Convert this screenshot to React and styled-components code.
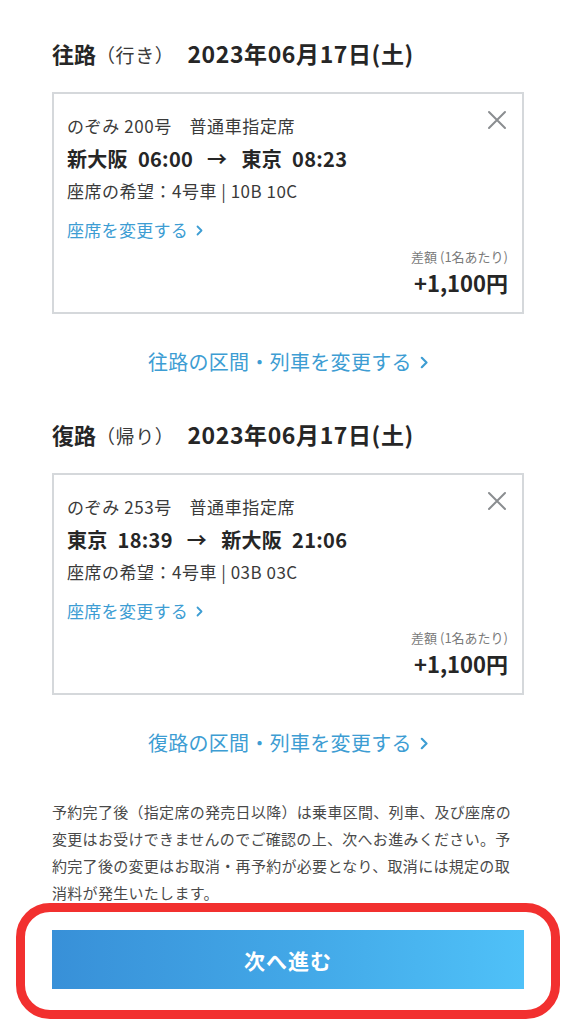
import styled, { createGlobalStyle } from "styled-components";

const GlobalStyle = createGlobalStyle`
  body {
    margin: 0;
    background: #ffffff;
    font-family: "Noto Sans CJK JP", "Noto Sans", sans-serif;
    color: #333333;
  }
`;

const Page = styled.main`
  padding: 37px 52px 0;
  display: flex;
  flex-direction: column;
`;

const SectionTitle = styled.h2`
  margin: ${(p) => (p.$first ? "0" : "41px")} 0 0;
  display: flex;
  align-items: baseline;
  font-size: 22px;
  line-height: 32px;
  font-weight: 700;
  color: #262626;
`;

const SubTitle = styled.span`
  font-size: 19px;
  font-weight: 400;
  letter-spacing: 0.6px;
  color: #3a3a3a;
  margin: 0 13px 0 0;
`;

const DateText = styled.span`
  font-size: 23px;
  letter-spacing: 0.6px;
`;

const Card = styled.section`
  position: relative;
  margin-top: 21px;
  border: 2px solid #d5d8db;
  padding: 18px 14px 15px 13px;
  display: flex;
  flex-direction: column;
`;

const CloseButton = styled.button`
  position: absolute;
  top: 15px;
  right: 14px;
  width: 22px;
  height: 22px;
  padding: 0;
  border: none;
  background: none;
  display: flex;
  align-items: center;
  justify-content: center;
`;

const TrainName = styled.div`
  font-size: 17px;
  line-height: 28px;
  letter-spacing: 0.6px;
  color: #3a3a3a;
`;

const Route = styled.div`
  margin-top: 3px;
  font-size: 20px;
  line-height: 32px;
  font-weight: 700;
  letter-spacing: 0.3px;
  color: #262626;
  display: flex;
  gap: 10px;
  align-items: baseline;
`;

const Arrow = styled.span`
  margin: 0 4px;
`;

const SeatInfo = styled.div`
  margin-top: 2px;
  font-size: 17px;
  line-height: 28px;
  letter-spacing: 0.5px;
  color: #3a3a3a;
`;

const Link = styled.a`
  display: flex;
  align-items: center;
  gap: 8px;
  color: #3d9dd3;
  text-decoration: none;
  letter-spacing: 0.3px;
  font-size: ${(p) => (p.$large ? "20px" : "17px")};
  line-height: ${(p) => (p.$large ? "30px" : "28px")};
  align-self: ${(p) => (p.$large ? "center" : "flex-start")};
`;

const SeatLink = styled(Link)`
  margin-top: 11px;
`;

const RouteLink = styled(Link)`
  margin-top: 33px;
`;

const PriceBlock = styled.div`
  margin-top: 3px;
  display: flex;
  flex-direction: column;
  align-items: flex-end;
`;

const PriceLabel = styled.span`
  font-size: 13px;
  line-height: 20px;
  color: #7a7a7a;
`;

const Price = styled.span`
  font-size: 22px;
  line-height: 30px;
  font-weight: 700;
  color: #262626;
`;

const Notice = styled.p`
  margin: 40px 0 0;
  font-size: 15px;
  letter-spacing: 0.3px;
  line-height: 27px;
  color: #4a4a4a;
`;

const Highlight = styled.div`
  margin: -3px -36px 0;
  border: 9px solid #f2302f;
  border-radius: 34px;
  padding: 18px 27px 21px;
`;

const NextButton = styled.button`
  width: 100%;
  height: 59px;
  border: none;
  background: linear-gradient(90deg, #3890d8 0%, #43a9e8 55%, #4fc1f8 100%);
  color: #ffffff;
  font-family: "Noto Sans CJK JP", "Noto Sans", sans-serif;
  font-size: 21px;
  font-weight: 700;
  letter-spacing: 1px;
`;

const Chevron = ({ size = 11 }) => (
  <svg width={size * 0.64} height={size} viewBox="0 0 7 11" fill="none">
    <path d="M1.5 1.5 L5.5 5.5 L1.5 9.5" stroke="currentColor" strokeWidth="1.8" strokeLinecap="round" strokeLinejoin="round" />
  </svg>
);

const CloseIcon = () => (
  <svg width="20" height="20" viewBox="0 0 20 20" fill="none">
    <path d="M2 2 L18 18 M18 2 L2 18" stroke="#8a8d90" strokeWidth="2" strokeLinecap="round" />
  </svg>
);

const legs = [
  {
    title: "往路",
    sub: "（行き）",
    date: "2023年06月17日(土)",
    train: "のぞみ 200号　普通車指定席",
    from: "新大阪",
    dep: "06:00",
    to: "東京",
    arr: "08:23",
    seat: "座席の希望：4号車 | 10B 10C",
    change: "往路の区間・列車を変更する",
  },
  {
    title: "復路",
    sub: "（帰り）",
    date: "2023年06月17日(土)",
    train: "のぞみ 253号　普通車指定席",
    from: "東京",
    dep: "18:39",
    to: "新大阪",
    arr: "21:06",
    seat: "座席の希望：4号車 | 03B 03C",
    change: "復路の区間・列車を変更する",
  },
];

const App = () => {
  return (
    <>
      <GlobalStyle />
      <Page>
        {legs.map((leg, i) => (
          <div key={leg.title} style={{ display: "contents" }}>
            <SectionTitle $first={i === 0}>
              {leg.title}
              <SubTitle>{leg.sub}</SubTitle>
              <DateText>{leg.date}</DateText>
            </SectionTitle>
            <Card>
              <CloseButton aria-label="削除">
                <CloseIcon />
              </CloseButton>
              <TrainName>{leg.train}</TrainName>
              <Route>
                <span>{leg.from}</span>
                <span>{leg.dep}</span>
                <Arrow>→</Arrow>
                <span>{leg.to}</span>
                <span>{leg.arr}</span>
              </Route>
              <SeatInfo>{leg.seat}</SeatInfo>
              <SeatLink href="#">
                座席を変更する
                <Chevron size={11} />
              </SeatLink>
              <PriceBlock>
                <PriceLabel>差額 (1名あたり)</PriceLabel>
                <Price>+1,100円</Price>
              </PriceBlock>
            </Card>
            <RouteLink href="#" $large>
              {leg.change}
              <Chevron size={13} />
            </RouteLink>
          </div>
        ))}
        <Notice>
          予約完了後（指定席の発売日以降）は乗車区間、列車、及び座席の変更はお受けできませんのでご確認の上、次へお進みください。予約完了後の変更はお取消・再予約が必要となり、取消には規定の取消料が発生いたします。
        </Notice>
        <Highlight>
          <NextButton>次へ進む</NextButton>
        </Highlight>
      </Page>
    </>
  );
};

export default App;
